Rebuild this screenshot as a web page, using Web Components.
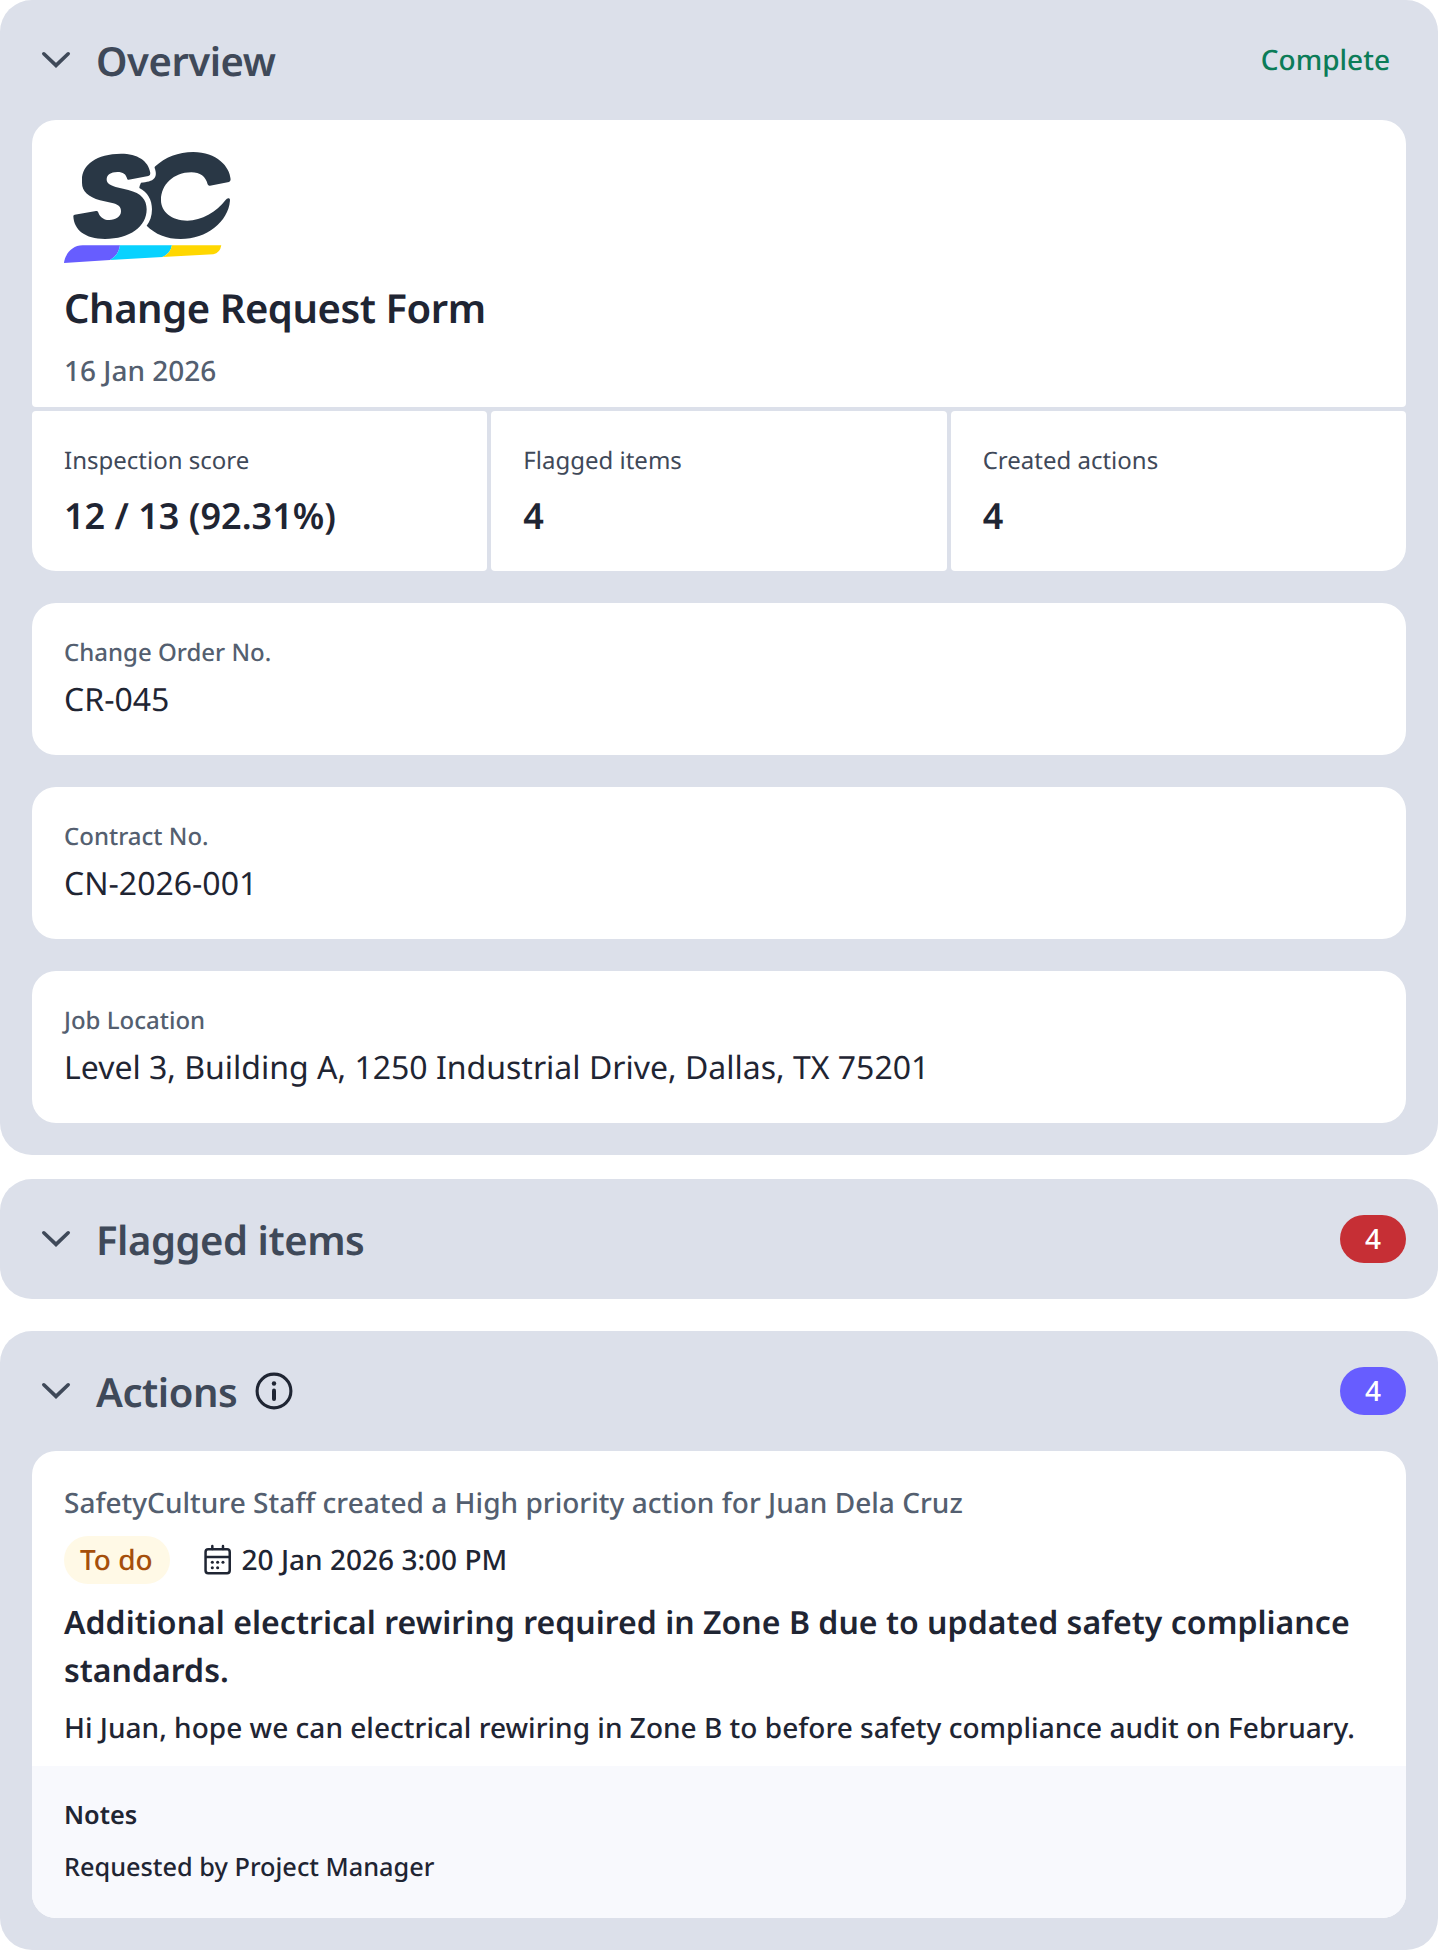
<!DOCTYPE html>
<html lang="en">
<head>
<meta charset="utf-8">
<title>Inspection report</title>
<style>
html, body { margin: 0; background: #fff; }
body { font-family: "Noto Sans", sans-serif; color: #1f2533; text-rendering: geometricPrecision; }
</style>
</head>
<body>
<report-page>
  <report-section heading="Overview">
    <status-text slot="end">Complete</status-text>
    <summary-card name="Change Request Form" date="16 Jan 2026">
      <brand-logo slot="logo"></brand-logo>
      <stat-cell label="Inspection score">12 / 13 (92.31%)</stat-cell>
      <stat-cell label="Flagged items">4</stat-cell>
      <stat-cell label="Created actions">4</stat-cell>
    </summary-card>
    <field-card label="Change Order No.">CR-045</field-card>
    <field-card label="Contract No.">CN-2026-001</field-card>
    <field-card label="Job Location">Level 3, Building A, 1250 Industrial Drive, Dallas, TX 75201</field-card>
  </report-section>
  <report-section heading="Flagged items" class="flagged">
    <count-badge slot="end" style="--tone:#c62f35">4</count-badge>
  </report-section>
  <report-section heading="Actions" class="actions">
    <info-icon slot="icon"></info-icon>
    <count-badge slot="end" style="--tone:#675dff">4</count-badge>
    <action-card>
      <span slot="meta">SafetyCulture Staff created a High priority action for Juan Dela Cruz</span>
      <span slot="status">To do</span>
      <span slot="due">20 Jan 2026 3:00 PM</span>
      <span slot="title">Additional electrical rewiring required in Zone B due to updated safety compliance standards.</span>
      <span slot="description">Hi Juan, hope we can electrical rewiring in Zone B to before safety compliance audit on February.</span>
      <span slot="notes-title">Notes</span>
      <span slot="notes">Requested by Project Manager</span>
    </action-card>
  </report-section>
</report-page>
<script>
const define = (name, markup) => customElements.define(name, class extends HTMLElement {
  connectedCallback() {
    if (this.shadowRoot) return;
    const root = this.attachShadow({ mode: 'open' });
    root.innerHTML = markup;
    root.querySelectorAll('[data-attr]').forEach(el => {
      el.textContent = this.getAttribute(el.dataset.attr) || '';
    });
  }
});

define('report-page', `<style>
  :host { display: flex; flex-direction: column; height: 1951px; }
  ::slotted(.flagged) { margin-top: 24px; }
  ::slotted(.actions) { margin-top: 32px; }
</style><slot></slot>`);

define('report-section', `<style>
  :host { display: block; background: #dce0ea; border-radius: 32px; }
  header { display: flex; align-items: center; height: 120px; box-sizing: border-box; padding: 0 32px 0 40px; color: #3f4959; }
  .chevron { width: 32px; height: 32px; flex: none; }
  h2 { margin: 0 0 0 24px; padding-top: 2px; font-size: 40px; font-weight: 600; letter-spacing: -.45px; line-height: 56px; }
  .end { margin-left: auto; }
  .body { display: flex; flex-direction: column; gap: 32px; padding: 0 32px; }
  ::slotted(:last-child:not([slot])) { margin-bottom: 32px; }
</style>
<header>
  <svg class="chevron" viewBox="0 0 32 32" fill="none" stroke="currentColor" stroke-width="3.6" stroke-linecap="round"><path d="M3.8 9.8 16 21.4 28.2 9.8"/></svg>
  <h2 data-attr="heading"></h2><slot name="icon"></slot>
  <div class="end"><slot name="end"></slot></div>
</header>
<div class="body"><slot></slot></div>`);

define('status-text', `<style>
  :host { display: block; padding: 0 16px 0 0; font-size: 28px; line-height: 40px; font-weight: 500; color: #0c7c58; }
</style><slot></slot>`);

define('count-badge', `<style>
  :host { display: flex; align-items: center; justify-content: center; width: 66px; height: 48px; border-radius: 24px; background: var(--tone); color: #fff; font-size: 28px; line-height: 40px; font-weight: 500; }
</style><slot></slot>`);

define('info-icon', `<style>
  :host { display: block; width: 40px; height: 40px; margin-left: 16.5px; color: #1f2533; }
  svg { display: block; }
</style>
<svg width="40" height="40" viewBox="0 0 40 40"><circle cx="20" cy="20" r="16.9" fill="none" stroke="currentColor" stroke-width="3.1"/><circle cx="20" cy="12.5" r="2.2" fill="currentColor"/><rect x="18" y="17.6" width="4" height="12.4" rx="2" fill="currentColor"/></svg>`);

define('brand-logo', `<style>:host { display: block; height: 110.7px; } svg { display: block; }</style>
<svg width="167.3" height="111.3" viewBox="42 36 502 334">
  <g fill="#293745">
    <path d="M70 229Q70 225 74 224L138 213Q142 212 144 215C148 228 158 240 178 240C198 240 213 230 213 214C213 200 205 194 190 190L150 181C115 170 96 155 96 128V118C96 75 140 41 213 41C262 41 296 62 301 99Q302 106 295 108L236 119Q231 120 231 115C228 103 220 96 202 96C182 96 170 105 170 118C170 130 180 136 197 141L235 150C275 160 290 180 290 208C290 260 240 297 165 297C105 297 72 270 70 229Z"/>
    <path d="M316 79C345 52 385 36 430 36C500 36 540 80 542 118Q542 125 537 126L480 137Q475 138 473 133C468 110 450 97 424 97C370 97 333 135 333 180C333 215 365 242 412 242C455 242 500 215 527 180Q531 174 537 175Q541 176 540 182C535 245 470 297 392 297C350 297 315 282 290 257C300 245 306 228 306 208C306 180 293 156 268 144Q268 138 273 128C290 127 306 124 313 115C320 106 318 95 314 84Q313 81 316 79Z"/>
  </g>
  <path fill="#675dff" d="M98 316H210Q206 346 180 360L42 369C44 345 65 316 98 316Z"/>
  <path fill="#08d2ff" d="M210 316H366Q361 341 337 351L180 360Q206 346 210 316Z"/>
  <path fill="#ffd700" d="M366 316H514Q510 340 490 343L337 351Q361 341 366 316Z"/>
</svg>`);

define('summary-card', `<style>
  :host { display: flex; flex-direction: column; gap: 4px; }
  .top { background: #fff; border-radius: 24px 24px 4px 4px; padding: 32px 32px 16px; display: flex; flex-direction: column; gap: 16px; }
  h1 { margin: 0; padding-top: 1px; font-size: 40px; line-height: 56px; font-weight: 600; letter-spacing: -.45px; }
  .date { font-size: 28px; line-height: 38px; padding-bottom: 1px; font-weight: 500; color: #545f70; }
  .stats { display: grid; grid-template-columns: repeat(3, 1fr); gap: 4px; }
  ::slotted(stat-cell:first-of-type) { border-bottom-left-radius: 24px !important; }
  ::slotted(stat-cell:last-of-type) { border-bottom-right-radius: 24px !important; }
</style>
<div class="top"><slot name="logo"></slot><h1 data-attr="name"></h1><div class="date" data-attr="date"></div></div>
<div class="stats"><slot></slot></div>`);

define('stat-cell', `<style>
  :host { display: flex; flex-direction: column; gap: 15px; padding: 34px 32px 31px; background: #fff; border-radius: 4px; }
  .label { font-size: 24px; line-height: 32px; color: #3f4959; }
  .value { font-size: 36px; line-height: 48px; font-weight: 600; }
</style><div class="label" data-attr="label"></div><div class="value"><slot></slot></div>`);

define('field-card', `<style>
  :host { display: flex; flex-direction: column; gap: 7px; padding: 34px 32px 31px; background: #fff; border-radius: 24px; }
  .label { font-size: 24px; line-height: 32px; font-weight: 500; color: #545f70; }
  .value { font-size: 32px; line-height: 48px; }
</style><div class="label" data-attr="label"></div><div class="value"><slot></slot></div>`);

define('action-card', `<style>
  :host { display: block; background: #fff; border-radius: 24px; overflow: hidden; }
  .main { display: flex; flex-direction: column; padding: 32px 32px 18.3px; font-size: 28px; line-height: 40px; font-weight: 500; letter-spacing: .018px; }
  .meta { color: #545f70; }
  .row { display: flex; align-items: center; height: 48px; margin: 13px 0 15px; }
  .pill { background: #fff9e6; color: #a54f0b; border-radius: 24px; height: 48px; line-height: 48px; padding: 0 17px 0 16px; box-sizing: border-box; margin-right: 33px; }
  .due { line-height: 48px; height: 48px; margin-left: 9.5px; }
  .title { font-size: 32px; line-height: 48px; font-weight: 600; margin-bottom: 13px; letter-spacing: .03px; }
  .notes { background: #f8f9fd; padding: 33px 32px 35px; font-size: 25.3px; line-height: 32px; font-weight: 500; display: flex; flex-direction: column; gap: 20px; }
  .notes b { font-weight: 600; }
</style>
<div class="main">
  <div class="meta"><slot name="meta"></slot></div>
  <div class="row">
    <div class="pill"><slot name="status"></slot></div>
    <svg width="29.3" height="32" viewBox="0 0 88 96" fill="none" stroke="currentColor" stroke-width="7.5"><rect x="7.7" y="15.7" width="72.6" height="72" rx="8"/><path d="M8 39H80"/><path d="M28 15V6M60 15V6" stroke-linecap="round"/><g fill="currentColor" stroke="none"><circle cx="28" cy="55" r="4.6"/><circle cx="44" cy="55" r="4.6"/><circle cx="60" cy="55" r="4.6"/><circle cx="28" cy="71" r="4.6"/><circle cx="44" cy="71" r="4.6"/></g></svg>
    <div class="due"><slot name="due"></slot></div>
  </div>
  <div class="title"><slot name="title"></slot></div>
  <div><slot name="description"></slot></div>
</div>
<div class="notes"><b><slot name="notes-title"></slot></b><div><slot name="notes"></slot></div></div>`);
</script>
</body>
</html>
